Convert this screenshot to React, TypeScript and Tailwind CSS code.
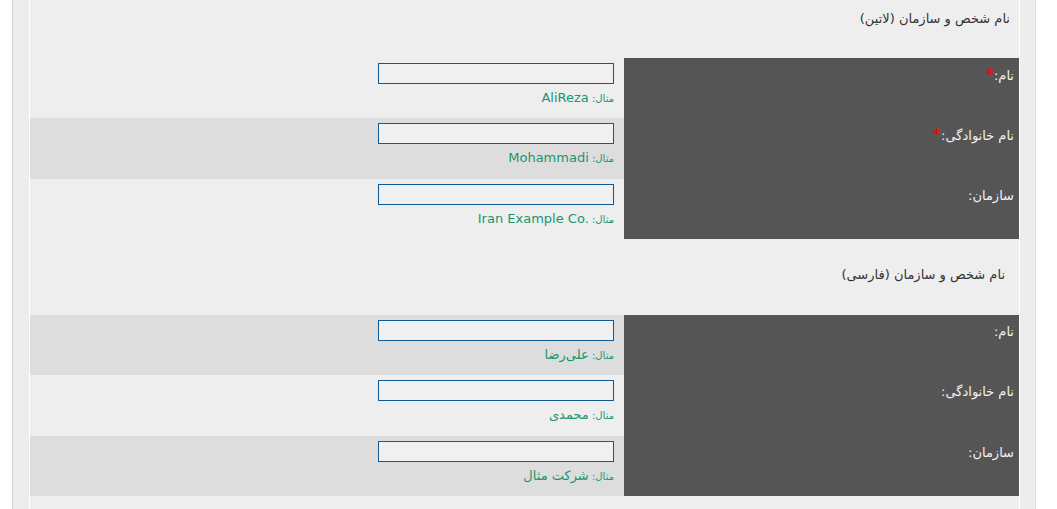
import React from "react"

type Field = {
  label: string
  required?: boolean
  example: string
}

const latinFields: Field[] = [
  { label: "نام:", required: true, example: "AliReza" },
  { label: "نام خانوادگی:", required: true, example: "Mohammadi" },
  { label: "سازمان:", example: "Iran Example Co." },
]

const persianFields: Field[] = [
  { label: "نام:", example: "علی‌رضا" },
  { label: "نام خانوادگی:", example: "محمدی" },
  { label: "سازمان:", example: "شرکت مثال" },
]

function FieldRow({ field, shaded, tall, latin }: { field: Field; shaded: boolean; tall?: boolean; latin?: boolean }) {
  return (
    <div className={`flex ${tall ? "h-[61px]" : "h-[60px]"}`}>
      {/* Label */}
      <div className="w-[395px] shrink-0 bg-[#555555] pr-[5px] pt-[9px] text-[13px] leading-[16px] text-[#f2f2f2]">
        {field.label}
        {field.required && <span className="text-[16px] text-[#ff0000]">*</span>}
      </div>

      {/* Input + example */}
      <div className={`flex-1 pr-[10px] pt-[5px] ${shaded ? "bg-[#dddddd]" : "bg-[#eeeeee]"}`}>
        <input
          type="text"
          className="block h-[21px] w-[236px] border border-[#0d5a96] bg-[#f0f0f0] outline-none"
        />
        <div className="mt-[5px] text-[#1a9570] leading-[16px]">
          <span className="text-[10px]">مثال: </span>
          <span className="text-[13px]" dir={latin ? "ltr" : "rtl"}>
            {field.example}
          </span>
        </div>
      </div>
    </div>
  )
}

export default function App() {
  return (
    <div
      dir="rtl"
      className="min-h-screen bg-white"
      style={{ fontFamily: '"DejaVu Sans", "Noto Sans", sans-serif' }}
    >
      <div className="mr-[21px] w-[1024px] border-x border-l-[#d2d2d2] border-r-[#dcdcdc] bg-[#ededed] pl-[16px] pr-[15px]">
        <div className="min-h-[509px] border-x border-white bg-[#eeeeee]">
          {/* Latin section */}
          <div className="h-[58px] pr-[9px] pt-[11px] text-[13px] leading-[16px] text-[#333333]">
            نام شخص و سازمان (لاتین)
          </div>
          <div>
            {latinFields.map((f, i) => (
              <FieldRow key={i} field={f} shaded={i === 1} tall={i === 1} latin />
            ))}
          </div>

          {/* Persian section */}
          <div className="h-[76px] pr-[14px] pt-[28px] text-[13px] leading-[16px] text-[#333333]">
            نام شخص و سازمان (فارسی)
          </div>
          <div>
            {persianFields.map((f, i) => (
              <FieldRow key={i} field={f} shaded={i !== 1} tall={i === 1} />
            ))}
          </div>
        </div>
      </div>
    </div>
  )
}
